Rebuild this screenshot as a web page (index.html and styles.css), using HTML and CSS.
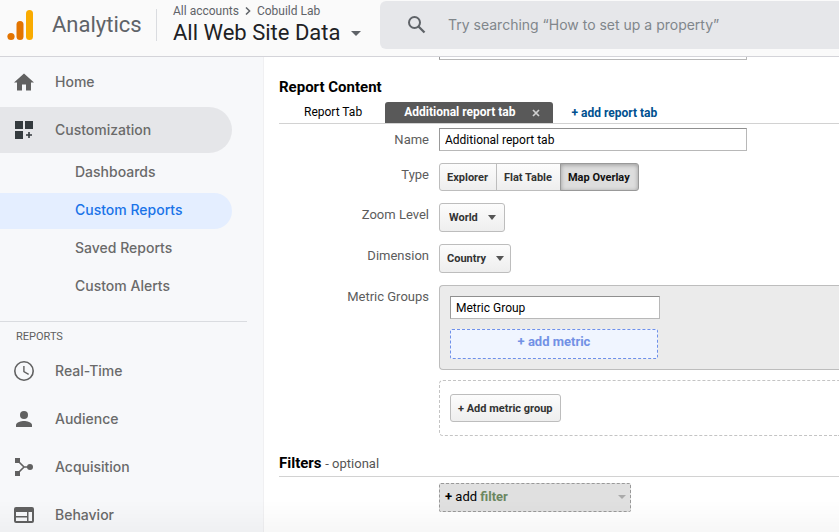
FILE: index.html
```html
<!DOCTYPE html>
<html lang="en">
<head>
<meta charset="utf-8">
<title>Analytics</title>
<link rel="stylesheet" href="styles.css">
</head>
<body>
<header class="topbar">
  <a class="brand" href="#">
    <svg class="logo" viewBox="0 0 28 32" aria-hidden="true"><rect x="19" y="1" width="7" height="30" rx="3.5" fill="#f9ab00"/><rect x="9.500" y="12" width="7" height="19" rx="3.500" fill="#e37400"/><circle cx="4" cy="27.500" r="3.600" fill="#e37400"/></svg>
    <span class="brand-name">Analytics</span>
  </a>
  <div class="account">
    <div class="crumbs"><span>All accounts</span><svg class="chevron" viewBox="0 0 6 8" aria-hidden="true"><path d="M1 .5 4.600 4 1 7.500" fill="none" stroke="#5f6368" stroke-width="1.500"/></svg><span>Cobuild Lab</span></div>
    <button class="view-picker" type="button">All Web Site Data<span class="caret"></span></button>
  </div>
  <label class="search">
    <svg class="search-icon" viewBox="0 0 20 20" aria-label="Search"><circle cx="7.500" cy="7.500" r="5.500" fill="none" stroke="#5f6368" stroke-width="2"/><path d="m11.500 11.500 6 6" stroke="#5f6368" stroke-width="2.300"/></svg>
    <input type="text" placeholder="Try searching “How to set up a property”">
  </label>
</header>
<div class="body">
  <nav class="sidebar">
    <a class="item" href="#"><svg viewBox="0 0 24 24" aria-hidden="true"><path d="M10 20.500v-6h4v6h5v-8h3L12 3.500 2 12.500h3v8z"/></svg>Home</a>
    <a class="item open" href="#"><svg class="dark" viewBox="0 0 24 24" aria-hidden="true"><path d="M3 3h8v8H3zM13 3h8v8h-8zM3 13h8v8H3zM16.200 14h1.600v2.200H20v1.600h-2.200V20h-1.600v-2.200H14v-1.600h2.200z"/></svg>Customization</a>
    <a class="sub" href="#">Dashboards</a>
    <a class="sub current" href="#">Custom Reports</a>
    <a class="sub" href="#">Saved Reports</a>
    <a class="sub" href="#">Custom Alerts</a>
    <h2 class="group">REPORTS</h2>
    <a class="item" href="#"><svg viewBox="0 0 24 24" aria-hidden="true"><circle cx="12" cy="12" r="9.200" fill="none" stroke="#616161" stroke-width="1.600"/><path d="M11.200 7h1.400v5.200l4.400 2.600-.7 1.200-5.100-3z"/></svg>Real-Time</a>
    <a class="item" href="#"><svg viewBox="0 0 24 24" aria-hidden="true"><circle cx="12" cy="8" r="4"/><path d="M4 20v-2c0-2.700 5.300-4 8-4s8 1.300 8 4v2z"/></svg>Audience</a>
    <a class="item" href="#"><svg viewBox="0 0 24 24" aria-hidden="true"><path d="M3 3h5v5H3zM3 16h5v5H3z"/><circle cx="18" cy="12" r="3"/><path d="m6 6 6 6-6 6M12 12h6" fill="none" stroke="#616161" stroke-width="1.600"/></svg>Acquisition</a>
    <a class="item" href="#"><svg viewBox="0 0 24 24" aria-hidden="true"><path fill-rule="evenodd" d="M4 4h16a2 2 0 0 1 2 2v12a2 2 0 0 1-2 2H4a2 2 0 0 1-2-2V6a2 2 0 0 1 2-2zM4 9v4h11V9zM4 14.500V18h11v-3.500zM16.500 9v9H20V9z"/></svg>Behavior</a>
  </nav>
  <main class="content">
    <input class="field wide title-field" type="text" aria-label="Title">
    <h2 class="heading">Report Content</h2>
    <div class="tabs">
      <button class="tab" type="button">Report Tab</button>
      <div class="tab active"><span>Additional report tab</span><button class="close" type="button" aria-label="Close tab"><svg viewBox="0 0 8 8" aria-hidden="true"><path d="m1 1 6 6M7 1 1 7" stroke="#d0d0d0" stroke-width="1.700"/></svg></button></div>
      <button class="add-tab" type="button">+ add report tab</button>
    </div>
    <form class="form">
      <label class="label" for="name">Name</label>
      <div><input class="field wide" id="name" type="text" value="Additional report tab"></div>
      <span class="label" id="type">Type</span>
      <div class="segments" role="group" aria-labelledby="type">
        <button class="btn" type="button">Explorer</button><button class="btn" type="button">Flat Table</button><button class="btn pressed" type="button">Map Overlay</button>
      </div>
      <label class="label" for="zoom">Zoom Level</label>
      <div><span class="picker"><select class="btn" id="zoom"><option>World</option></select></span></div>
      <label class="label" for="dimension">Dimension</label>
      <div><span class="picker compact"><select class="btn" id="dimension"><option>Country</option></select></span></div>
      <label class="label" for="metric">Metric Groups</label>
      <div class="groups">
        <div class="metric-box">
          <input class="field" id="metric" type="text" value="Metric Group">
          <button class="add-metric" type="button">+ add metric</button>
        </div>
        <div class="new-group"><button class="btn" type="button">+ Add metric group</button></div>
      </div>
    </form>
    <h2 class="heading filters">Filters <small>- optional</small></h2>
    <button class="add-filter" type="button"><span><b>+</b> add <b class="green">filter</b></span><span class="caret"></span></button>
  </main>
</div>
</body>
</html>
```

FILE: styles.css
```css
* { box-sizing: border-box; }
body {
  margin: 0;
  height: 100vh;
  overflow: hidden;
  display: flex;
  flex-direction: column;
  font-family: Roboto, "Liberation Sans", sans-serif;
  font-size: 12px;
  color: #000;
  background: #fff;
}
body::after {
  content: "";
  position: fixed;
  left: 0;
  right: 0;
  bottom: 0;
  height: 32px;
  background: linear-gradient(transparent, rgba(0, 0, 0, .03));
  pointer-events: none;
}
button, input, select { font: inherit; color: inherit; }
button { cursor: pointer; }
a { color: inherit; text-decoration: none; }

.topbar {
  flex: none;
  display: flex;
  align-items: flex-start;
  height: 57px;
  background: #fafafa;
  border-bottom: 1px solid #d4d4d9;
}
.brand {
  display: flex;
  align-items: center;
  gap: 17px;
  width: 157px;
  height: 32px;
  margin-top: 9px;
  padding-left: 7px;
  border-right: 1px solid #dadce0;
}
.logo { width: 28px; height: 32px; }
.brand-name { font: 22px/32px Roboto, sans-serif; color: #5f6368; }
.account { width: 207px; margin: 3px 0 0 16px; }
.crumbs {
  display: flex;
  align-items: center;
  gap: 6px;
  line-height: 16px;
  color: #5f6368;
}
.chevron { width: 6px; height: 8px; }
.view-picker {
  display: flex;
  align-items: center;
  gap: 11px;
  padding: 0;
  border: 0;
  background: none;
  font: 22px/28px Roboto, sans-serif;
  color: #202124;
  white-space: nowrap;
}
.caret {
  border: 5px solid transparent;
  border-top-color: #5f6368;
  border-bottom: 0;
}
.search {
  flex: 1;
  display: flex;
  align-items: center;
  gap: 21px;
  height: 48px;
  margin-top: 1px;
  padding-left: 27px;
  background: #e6e7ea;
  border-radius: 6px 0 0 6px;
}
.search-icon { width: 20px; height: 20px; }
.search input {
  flex: 1;
  min-width: 0;
  padding: 0;
  border: 0;
  outline: 0;
  background: none;
  font: 14px/20px Inter, sans-serif;
}
.search input::placeholder { color: #80868b; opacity: 1; }

.body { flex: 1; min-height: 0; display: flex; }
.sidebar {
  flex: none;
  width: 264px;
  padding-top: 2px;
  overflow: hidden;
  background: #f7f8fa;
  border-right: 1px solid #f0f0f2;
  font: 500 14px/20px Inter, sans-serif;
  color: #6a6a6a;
}
.item {
  display: flex;
  align-items: center;
  gap: 19px;
  height: 46px;
  margin: 0 31px 2px 0;
  padding-left: 12px;
  border-radius: 0 23px 23px 0;
}
.item svg { width: 24px; height: 24px; fill: #616161; }
.item .dark { fill: #343a3e; }
.open { background: #e5e6e9; }
.sub {
  display: block;
  height: 36px;
  margin: 0 31px 2px 0;
  padding: 7px 0 0 75px;
  border-radius: 0 18px 18px 0;
}
.current { background: #e4eeff; color: #1a73e8; }
.group {
  margin: 16px 16px 3px 0;
  padding: 7px 16px 0;
  border-top: 1px solid #dadce0;
  font: 11px/16px Roboto, sans-serif;
  color: #606060;
}

.content { flex: 1; min-width: 0; padding-left: 15px; overflow: hidden; }
.field {
  display: block;
  width: 210px;
  height: 23px;
  padding: 0 5px;
  border: 1px solid #b8b8b8;
  border-top-color: #8f8f8f;
  border-left-color: #999;
  background: #fff;
  line-height: 20px;
  outline: 0;
}
.wide { width: 308px; }
.title-field { margin: -20px 0 0 160px; }
.heading { margin: 17px 0 5px; font: 700 15px/20px Roboto, sans-serif; }
.heading small { font-size: 13px; font-weight: 400; color: #555; }
.tabs {
  display: flex;
  height: 22px;
  padding-left: 2px;
  border-bottom: 1px solid #d2d2d2;
}
.tab, .add-tab { border: 0; background: none; padding: 0 23px; }
.tab { line-height: 21px; }
.tab.active {
  display: flex;
  align-items: center;
  gap: 17px;
  padding: 0 13px 0 19px;
  border-radius: 3px 3px 0 0;
  background: #595959;
  color: #fff;
  font-weight: 700;
}
.close { display: flex; padding: 0; border: 0; background: none; }
.close svg { width: 8px; height: 8px; }
.add-tab { padding: 0 18px; font-weight: 700; color: #00508f; }

.form {
  display: grid;
  grid-template-columns: 150px 1fr;
  column-gap: 10px;
  row-gap: 12px;
  padding-top: 4px;
}
.label {
  padding-top: 2px;
  text-align: right;
  font-size: 13px;
  line-height: 20px;
  color: #5c5c5c;
}
.segments, .picker { display: flex; }
.btn {
  height: 28px;
  padding: 0 7px;
  border: 1px solid #bdbdbd;
  border-radius: 3px;
  background: linear-gradient(#fcfcfc, #eee);
  font-size: 11px;
  font-weight: 700;
  color: #333;
}
.segments .btn { border-radius: 0; margin-right: -1px; padding-right: 8px; }
.segments .btn:first-child { border-radius: 3px 0 0 3px; }
.segments .btn:last-child { border-radius: 0 3px 3px 0; }
.segments .pressed {
  border-color: #999;
  background: #ddd;
  box-shadow: inset 0 1px 4px #999;
  color: #111;
}
.picker { position: relative; width: max-content; }
.picker select { appearance: none; height: 29px; padding: 0 26px 0 9px; }
.picker::after {
  content: "";
  position: absolute;
  right: 9px;
  top: 12px;
  border: 4px solid transparent;
  border-top: 5px solid #555;
  border-bottom: 0;
  pointer-events: none;
}
.compact select { padding: 0 23px 0 7px; }
.compact::after { right: 7px; }
.metric-box {
  padding: 10px;
  border: 1px solid #bdbdbd;
  border-right: 0;
  border-radius: 4px 0 0 4px;
  background: #ebebeb;
}
.add-metric {
  width: 208px;
  height: 30px;
  margin-top: 10px;
  padding: 0 0 5px;
  display: block;
  border: 1px dashed #6e90ea;
  border-radius: 2px;
  background: #f0f5ff;
  font-size: 13px;
  font-weight: 700;
  color: #7291e5;
}
.new-group {
  margin-top: 10px;
  padding: 13px 10px;
  border: 1px dashed #c4c4c4;
  border-right: 0;
  border-radius: 4px 0 0 4px;
}
.new-group .btn { display: block; }
.filters {
  margin: 17px 0 6px;
  padding-bottom: 2px;
  border-bottom: 1px solid #d2d2d2;
}
.add-filter {
  display: flex;
  justify-content: space-between;
  align-items: center;
  width: 192px;
  height: 29px;
  margin-left: 160px;
  padding: 0 4px 2px 5px;
  border: 1px dashed #999;
  border-radius: 2px;
  background: #e0e0e0;
  font-size: 13px;
}
.add-filter .caret { border-width: 4px 4px 0; border-top-color: #aaa; }
.green { color: #6b8760; }
```
